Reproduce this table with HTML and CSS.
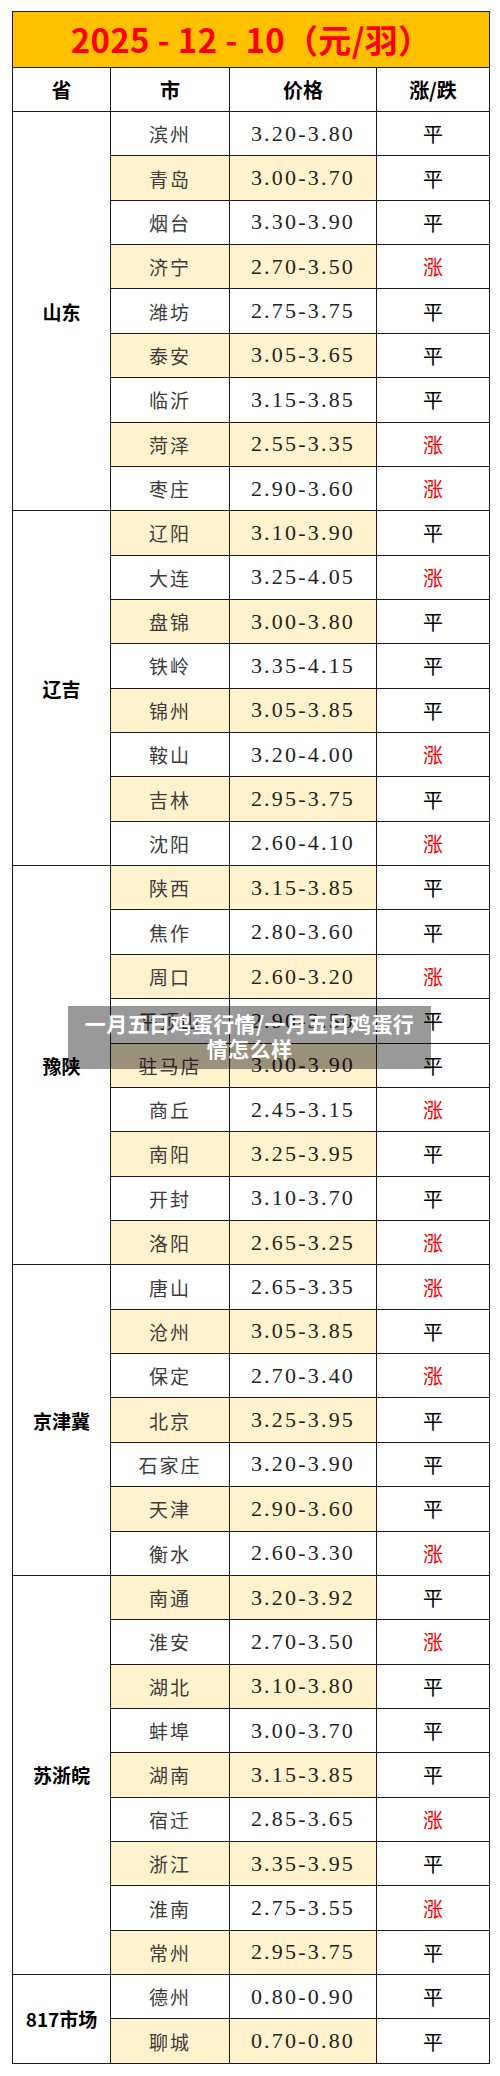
FILE: index.html
```html
<!DOCTYPE html>
<html lang="zh-CN">
<head>
<meta charset="utf-8">
<title>鸡蛋行情</title>
<link rel="stylesheet" href="styles.css">
</head>
<body>
<div class="page">
<table class="sheet">
  <colgroup>
    <col class="c-prov"><col class="c-city"><col class="c-price"><col class="c-trend">
  </colgroup>
  <thead>
    <tr class="title-row"><th colspan="4" class="title">2025 - 12 - 10（元/羽）</th></tr>
    <tr class="head-row"><th>省</th><th>市</th><th>价格</th><th>涨/跌</th></tr>
  </thead>
  <tbody>
    <tr><td class="prov" rowspan="9">山东</td><td class="city">滨州</td><td class="price">3.20-3.80</td><td class="flat">平</td></tr>
    <tr class="alt"><td class="city">青岛</td><td class="price">3.00-3.70</td><td class="flat">平</td></tr>
    <tr><td class="city">烟台</td><td class="price">3.30-3.90</td><td class="flat">平</td></tr>
    <tr class="alt"><td class="city">济宁</td><td class="price">2.70-3.50</td><td class="up">涨</td></tr>
    <tr><td class="city">潍坊</td><td class="price">2.75-3.75</td><td class="flat">平</td></tr>
    <tr class="alt"><td class="city">泰安</td><td class="price">3.05-3.65</td><td class="flat">平</td></tr>
    <tr><td class="city">临沂</td><td class="price">3.15-3.85</td><td class="flat">平</td></tr>
    <tr class="alt"><td class="city">菏泽</td><td class="price">2.55-3.35</td><td class="up">涨</td></tr>
    <tr><td class="city">枣庄</td><td class="price">2.90-3.60</td><td class="up">涨</td></tr>

    <tr class="alt"><td class="prov" rowspan="8">辽吉</td><td class="city">辽阳</td><td class="price">3.10-3.90</td><td class="flat">平</td></tr>
    <tr><td class="city">大连</td><td class="price">3.25-4.05</td><td class="up">涨</td></tr>
    <tr class="alt"><td class="city">盘锦</td><td class="price">3.00-3.80</td><td class="flat">平</td></tr>
    <tr><td class="city">铁岭</td><td class="price">3.35-4.15</td><td class="flat">平</td></tr>
    <tr class="alt"><td class="city">锦州</td><td class="price">3.05-3.85</td><td class="flat">平</td></tr>
    <tr><td class="city">鞍山</td><td class="price">3.20-4.00</td><td class="up">涨</td></tr>
    <tr class="alt"><td class="city">吉林</td><td class="price">2.95-3.75</td><td class="flat">平</td></tr>
    <tr><td class="city">沈阳</td><td class="price">2.60-4.10</td><td class="up">涨</td></tr>

    <tr class="alt"><td class="prov" rowspan="9">豫陕</td><td class="city">陕西</td><td class="price">3.15-3.85</td><td class="flat">平</td></tr>
    <tr><td class="city">焦作</td><td class="price">2.80-3.60</td><td class="flat">平</td></tr>
    <tr class="alt"><td class="city">周口</td><td class="price">2.60-3.20</td><td class="up">涨</td></tr>
    <tr><td class="city">平顶山</td><td class="price">2.90-3.50</td><td class="flat">平</td></tr>
    <tr class="alt"><td class="city">驻马店</td><td class="price">3.00-3.90</td><td class="flat">平</td></tr>
    <tr><td class="city">商丘</td><td class="price">2.45-3.15</td><td class="up">涨</td></tr>
    <tr class="alt"><td class="city">南阳</td><td class="price">3.25-3.95</td><td class="flat">平</td></tr>
    <tr><td class="city">开封</td><td class="price">3.10-3.70</td><td class="flat">平</td></tr>
    <tr class="alt"><td class="city">洛阳</td><td class="price">2.65-3.25</td><td class="up">涨</td></tr>

    <tr><td class="prov" rowspan="7">京津冀</td><td class="city">唐山</td><td class="price">2.65-3.35</td><td class="up">涨</td></tr>
    <tr class="alt"><td class="city">沧州</td><td class="price">3.05-3.85</td><td class="flat">平</td></tr>
    <tr><td class="city">保定</td><td class="price">2.70-3.40</td><td class="up">涨</td></tr>
    <tr class="alt"><td class="city">北京</td><td class="price">3.25-3.95</td><td class="flat">平</td></tr>
    <tr><td class="city">石家庄</td><td class="price">3.20-3.90</td><td class="flat">平</td></tr>
    <tr class="alt"><td class="city">天津</td><td class="price">2.90-3.60</td><td class="flat">平</td></tr>
    <tr><td class="city">衡水</td><td class="price">2.60-3.30</td><td class="up">涨</td></tr>

    <tr class="alt"><td class="prov" rowspan="9">苏浙皖</td><td class="city">南通</td><td class="price">3.20-3.92</td><td class="flat">平</td></tr>
    <tr><td class="city">淮安</td><td class="price">2.70-3.50</td><td class="up">涨</td></tr>
    <tr class="alt"><td class="city">湖北</td><td class="price">3.10-3.80</td><td class="flat">平</td></tr>
    <tr><td class="city">蚌埠</td><td class="price">3.00-3.70</td><td class="flat">平</td></tr>
    <tr class="alt"><td class="city">湖南</td><td class="price">3.15-3.85</td><td class="flat">平</td></tr>
    <tr><td class="city">宿迁</td><td class="price">2.85-3.65</td><td class="up">涨</td></tr>
    <tr class="alt"><td class="city">浙江</td><td class="price">3.35-3.95</td><td class="flat">平</td></tr>
    <tr><td class="city">淮南</td><td class="price">2.75-3.55</td><td class="up">涨</td></tr>
    <tr class="alt"><td class="city">常州</td><td class="price">2.95-3.75</td><td class="flat">平</td></tr>

    <tr><td class="prov" rowspan="2">817市场</td><td class="city">德州</td><td class="price">0.80-0.90</td><td class="flat">平</td></tr>
    <tr class="alt"><td class="city">聊城</td><td class="price">0.70-0.80</td><td class="flat">平</td></tr>
  </tbody>
</table>
</div>
<div class="caption">一月五日鸡蛋行情/一月五日鸡蛋行<br>情怎么样</div>
</body>
</html>
```

FILE: styles.css
```css
html, body {
  margin: 0;
  padding: 0;
  background: #ffffff;
}

body {
  width: 500px;
  height: 2076px;
  position: relative;
  font-family: "Noto Sans CJK SC", "Noto Sans", sans-serif;
}

.page {
  padding: 11px 11px 0 12px;
}

.sheet {
  border-collapse: collapse;
  table-layout: fixed;
  width: 477px;
}

.c-prov { width: 98px; }
.c-city { width: 119px; }
.c-price { width: 147px; }
.c-trend { width: 113px; }

.sheet th,
.sheet td {
  border: 1px solid #1c1c1c;
  padding: 0;
  text-align: center;
  vertical-align: middle;
}

.title-row { height: 56px; }

.title {
  background: #ffc000;
  color: #ff0000;
  font-weight: 700;
  font-size: 33px;
  line-height: 1;
  letter-spacing: 0.3px;
}

.head-row { height: 44px; }

.head-row th {
  background: #ffffff;
  color: #000000;
  font-weight: 700;
  font-size: 20px;
}

.sheet tbody tr { height: 44.36px; }

.prov {
  background: #ffffff;
  color: #000000;
  font-weight: 700;
  font-size: 19px;
}

.city {
  color: #3c3c3c;
  font-size: 19px;
  letter-spacing: 2px;
  padding-left: 2px;
  background: #ffffff;
}

.price {
  color: #222222;
  font-family: "Liberation Serif", "Times New Roman", serif;
  font-size: 22px;
  letter-spacing: 2.2px;
  padding-left: 2px;
  background: #ffffff;
}

.alt .city,
.alt .price {
  background: #fff2cc;
}

.flat,
.up {
  font-size: 20px;
  background: #ffffff;
}

.flat { color: #000000; }
.up { color: #ff0000; }

.caption {
  position: absolute;
  left: 68px;
  top: 1006px;
  width: 363px;
  height: 63px;
  box-sizing: border-box;
  padding: 5px 0 0;
  background: rgba(0, 0, 0, 0.4);
  color: #ffffff;
  font-weight: 700;
  font-size: 21px;
  letter-spacing: 0.4px;
  line-height: 25px;
  text-align: center;
  white-space: nowrap;
}
```
